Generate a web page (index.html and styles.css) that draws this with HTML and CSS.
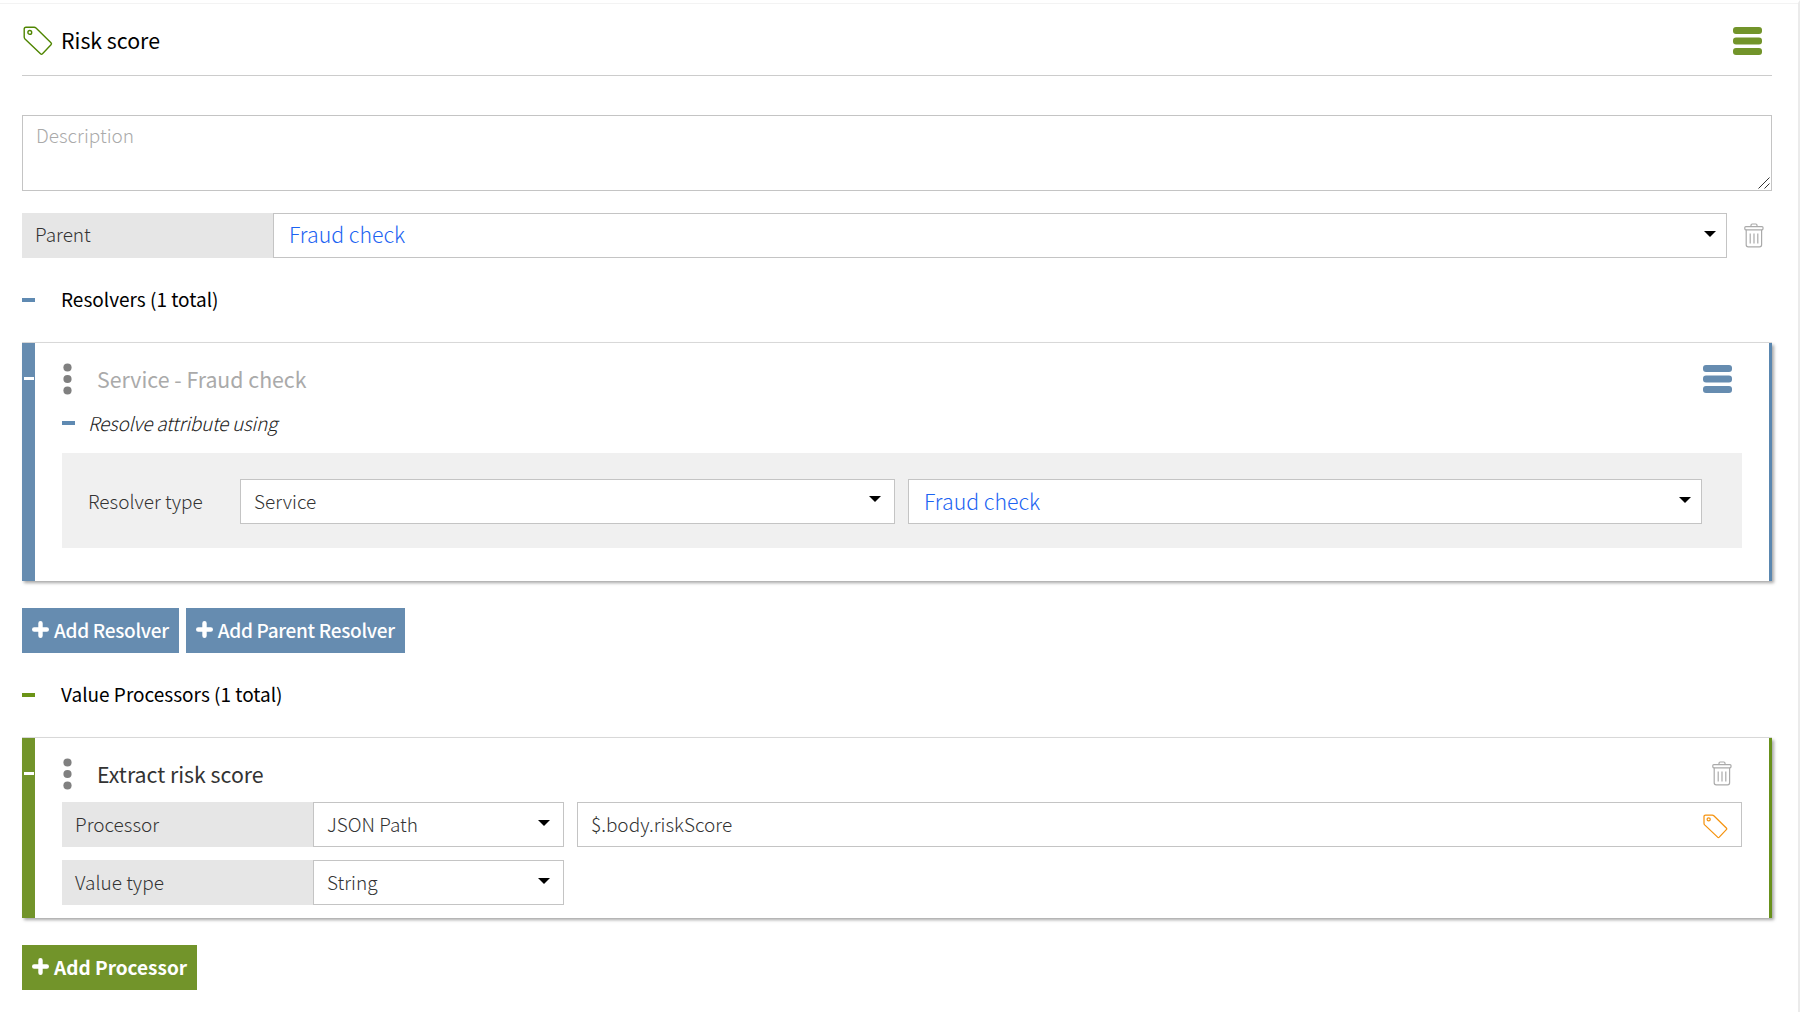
FILE: index.html
```html
<!DOCTYPE html>
<html lang="en">
<head>
    <meta charset="UTF-8">
    <meta name="viewport" content="width=device-width, initial-scale=1.0">
    <title>Risk score</title>
    <link rel="stylesheet" href="styles.css">
</head>
<body>
    <!-- shared icons -->
    <svg class="icon-defs" width="0" height="0">
        <symbol id="icon-tag" viewBox="0 0 30 30">
            <path d="M3 1.3 H11.2 Q12.2 1.3 13 2.1 L28 16.8 Q29 17.8 28 18.8 L19.5 27.8 Q18.5 28.8 17.5 27.8 L2 13 Q1.2 12.2 1.2 11 V3 Q1.2 1.3 3 1.3 Z" />
            <circle cx="6.8" cy="6.4" r="1.9" />
        </symbol>
        <symbol id="icon-trash" viewBox="0 0 20 25">
            <path d="M7 3.5 V2.2 Q7 1 8.2 1 H11.8 Q13 1 13 2.2 V3.5" />
            <rect x="0.8" y="3.6" width="18.2" height="3.2" rx="1" />
            <path d="M2.2 6.8 V21.8 Q2.2 23.8 4.2 23.8 H15.6 Q17.6 23.8 17.6 21.8 V6.8 M6.2 10.5 V20.5 M10 10.5 V20.5 M13.8 10.5 V20.5" />
        </symbol>
        <symbol id="icon-menu" viewBox="0 0 29 28">
            <rect x="0" y="0" width="29" height="7" rx="3" />
            <rect x="0" y="10.5" width="29" height="7" rx="3" />
            <rect x="0" y="21" width="29" height="7" rx="3" />
        </symbol>
        <symbol id="icon-dots" viewBox="0 0 9 32">
            <circle cx="4.5" cy="4.5" r="4.1" />
            <circle cx="4.5" cy="16" r="4.1" />
            <circle cx="4.5" cy="27.5" r="4.1" />
        </symbol>
        <symbol id="icon-plus" viewBox="0 0 17 17">
            <path d="M8.5 2.2 V14.8 M2.2 8.5 H14.8" />
        </symbol>
    </svg>

    <main>
        <header class="page-header">
            <svg class="tag"><use href="#icon-tag" /></svg>
            <h1>Risk score</h1>
            <svg class="menu green"><use href="#icon-menu" /></svg>
        </header>

        <div class="description">
            <textarea placeholder="Description"></textarea>
            <svg class="grip" viewBox="0 0 12 12"><path d="M0.5 11.5 L11.5 0.5 M6.5 11.5 L11.5 6.5" /></svg>
        </div>

        <div class="row parent-row">
            <div class="label">Parent</div>
            <div class="select link">Fraud check</div>
            <svg class="trash"><use href="#icon-trash" /></svg>
        </div>

        <h2 class="section-title blue">Resolvers (1 total)</h2>

        <section class="card blue resolver">
            <div class="card-header">
                <svg class="dots"><use href="#icon-dots" /></svg>
                <h3 class="muted">Service - Fraud check</h3>
                <svg class="menu blue"><use href="#icon-menu" /></svg>
            </div>
            <p class="sub-title">Resolve attribute using</p>
            <div class="panel">
                <span class="panel-label">Resolver type</span>
                <div class="select type">Service</div>
                <div class="select link">Fraud check</div>
            </div>
        </section>

        <div class="buttons">
            <button class="blue"><svg class="plus"><use href="#icon-plus" /></svg>Add Resolver</button>
            <button class="blue"><svg class="plus"><use href="#icon-plus" /></svg>Add Parent Resolver</button>
        </div>

        <h2 class="section-title green">Value Processors (1 total)</h2>

        <section class="card green processor">
            <div class="card-header">
                <svg class="dots"><use href="#icon-dots" /></svg>
                <h3>Extract risk score</h3>
                <svg class="trash"><use href="#icon-trash" /></svg>
            </div>
            <div class="row">
                <div class="label">Processor</div>
                <div class="select small">JSON Path</div>
                <div class="input">
                    <span>$.body.riskScore</span>
                    <svg class="tag orange"><use href="#icon-tag" /></svg>
                </div>
            </div>
            <div class="row">
                <div class="label">Value type</div>
                <div class="select small">String</div>
            </div>
        </section>

        <div class="buttons">
            <button class="green strong"><svg class="plus"><use href="#icon-plus" /></svg>Add Processor</button>
        </div>
    </main>
</body>
</html>
```
FILE: styles.css
```css
* {
    box-sizing: border-box;
}

body {
    font-family: "Noto Sans CJK SC", "Noto Sans", sans-serif;
    font-size: 19px;
    font-weight: 300;
    margin: 0;
    color: #333;
    background-color: #fff;
}

h1, h2, h3, p {
    margin: 0;
    font-weight: 400;
}

svg {
    display: block;
    flex: none;
}

.icon-defs {
    position: absolute;
}

main {
    height: 1012px;
    padding: 0 26px 0 22px;
    border-top: 3px solid #fff;
    border-right: 2px solid #ebebeb;
    box-shadow: inset 0 1px 0 #f3f3f3;
    overflow: hidden;
}

/* icons */
.tag {
    width: 30px;
    height: 30px;
    fill: none;
    stroke: #4f8500;
    stroke-width: 1.4;
}

.tag.orange {
    width: 25px;
    height: 25px;
    margin-top: 5px;
    stroke: #f5930f;
    stroke-width: 1.5;
}

.trash {
    width: 20px;
    height: 25px;
    fill: none;
    stroke: #aaa;
    stroke-width: 1.2;
}

.menu {
    width: 29px;
    height: 28px;
    margin-left: auto;
}

.menu.green {
    fill: #72942a;
}

.menu.blue {
    fill: #668cb0;
}

.dots {
    width: 9px;
    height: 32px;
    fill: #808080;
}

.plus {
    width: 17px;
    height: 17px;
    fill: none;
    stroke: #fff;
    stroke-width: 4.4;
    stroke-linecap: round;
}

/* page header */
.page-header {
    display: flex;
    align-items: center;
    height: 73px;
    padding: 3px 10px 0 1px;
    border-bottom: 1px solid #ccc;
}

.page-header h1 {
    margin: 0 0 2px 8px;
    font-size: 21.3px;
    color: #000;
}

.description {
    position: relative;
    height: 76px;
    margin-top: 39px;
}

textarea {
    display: block;
    width: 100%;
    height: 100%;
    padding: 5px 13px;
    border: 1px solid #c4c4c4;
    font: inherit;
    resize: none;
}

textarea::placeholder {
    color: #aaa;
}

.grip {
    position: absolute;
    right: 2px;
    bottom: 2px;
    width: 12px;
    height: 12px;
    fill: none;
    stroke: #333;
    stroke-width: 1;
}

/* form rows */
.row {
    display: flex;
    align-items: center;
    height: 45px;
}

.label {
    width: 251px;
    height: 45px;
    padding-left: 13px;
    line-height: 43px;
    background-color: #e6e6e6;
}

.select,
.input {
    display: flex;
    align-items: center;
    justify-content: space-between;
    flex: 1;
    height: 45px;
    padding: 0 13px 2px 13px;
    border: 1px solid #c4c4c4;
    background-color: #fff;
}

.select::after {
    content: "";
    margin-top: -2px;
    border-left: 6px solid transparent;
    border-right: 6px solid transparent;
    border-top: 6px solid #000;
}

.select.link {
    padding: 0 10px 4px 15px;
    font-size: 21.3px;
    color: #1c63f2;
}

.select.link::after {
    margin-top: 0;
}

.select.small {
    flex: 0 0 251px;
}

.input {
    margin-left: 13px;
}

.parent-row {
    margin-top: 22px;
    padding-right: 8px;
}

.parent-row .label {
    line-height: 42px;
}

.parent-row .trash {
    margin-left: 17px;
}

.section-title {
    display: flex;
    align-items: center;
    height: 85px;
    padding-bottom: 4px;
    font-size: 19px;
    line-height: 28px;
    color: #000;
}

.section-title::before {
    content: "";
    width: 13px;
    height: 4px;
    margin: 3px 26px 0 0;
}

.section-title.blue::before,
.sub-title::before {
    background-color: #5f8ab2;
}

.section-title.green::before {
    background-color: #6b9416;
}

/* cards */
.card {
    position: relative;
    padding: 0 27px;
    box-shadow: 0 -1px 0 #d8d8d8, 2px 2px 3px rgba(0, 0, 0, 0.35);
}

.card.blue {
    height: 238px;
    border-left: 13px solid #668cb0;
    border-right: 3px solid #5a87b0;
}

.card.green {
    height: 180px;
    border-left: 13px solid #72942a;
    border-right: 3px solid #68911b;
}

/* collapse mark on the coloured edge */
.card::before {
    content: "";
    position: absolute;
    left: -11px;
    top: 34px;
    width: 10px;
    height: 3px;
    background-color: #fff;
}

.card-header {
    display: flex;
    align-items: center;
    height: 62px;
    padding: 9px 10px 0 1px;
}

.card-header h3 {
    margin: 0 0 0 25px;
    font-size: 21.3px;
}

.card-header h3.muted {
    color: #aaa;
}

.card-header .trash {
    margin-left: auto;
}

.processor .card-header {
    height: 64px;
    padding: 7px 10px 0 1px;
}

.processor h3 {
    margin-bottom: 1px;
}

.sub-title {
    display: flex;
    align-items: center;
    height: 34px;
    font-style: italic;
    font-weight: 300;
    letter-spacing: -0.25px;
    color: #222;
}

.sub-title::before {
    content: "";
    width: 13px;
    height: 4px;
    margin: 2px 13px 0 0;
}

.panel {
    display: flex;
    align-items: center;
    height: 95px;
    margin-top: 14px;
    padding: 1px 40px 0 26px;
    background-color: #f0f0f0;
}

.panel-label {
    width: 152px;
    margin-bottom: 2px;
}

.panel .type {
    flex: 0 0 655px;
    margin-right: 13px;
}

.panel .link {
    padding-bottom: 2px;
}

.processor .row + .row {
    margin-top: 13px;
}

.buttons {
    display: flex;
    gap: 7px;
    margin-top: 27px;
}

button {
    display: flex;
    align-items: center;
    gap: 5px;
    height: 45px;
    padding: 0 10px 3px;
    border: none;
    font: inherit;
    font-weight: 500;
    letter-spacing: -0.3px;
    color: #fff;
}

button.blue {
    background-color: #668cb0;
}

button.green {
    background-color: #72942a;
}

button.strong {
    padding-bottom: 2px;
    font-weight: 700;
    letter-spacing: 0;
}
```
